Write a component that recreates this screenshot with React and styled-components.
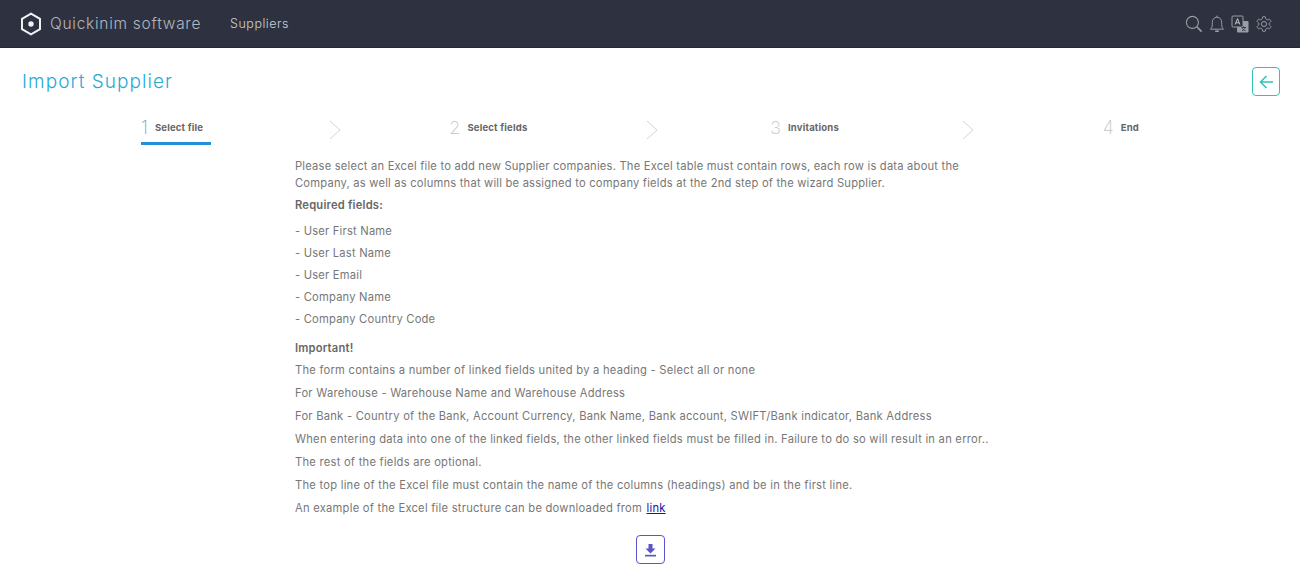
import React from "react";
import styled, { createGlobalStyle } from "styled-components";

const Global = createGlobalStyle`
  html, body { margin: 0; padding: 0; background: #fff; overflow: hidden; }
  body { font-family: Inter, "Noto Sans", sans-serif; color: #6b6b6b; }
`;
const Page = styled.div`height: 572px; overflow: hidden; display: flex; flex-direction: column;`;
const TopBar = styled.header`
  height: 47px; background: #2e3240; border-bottom: 1px solid #262a36; display: flex; align-items: center;
  padding: 0 27px 0 20px; flex: none;
`;
const Brand = styled.div`
  display: flex; align-items: center; gap: 8px; color: #b4b6bc; font-size: 15.5px; font-weight: 300; letter-spacing: 0.72px;
`;
const NavLink = styled.a`
  margin-left: 29px; color: #cfd0d4; font-size: 12.5px; font-weight: 300; letter-spacing: 0.5px;
`;
const Tools = styled.div`margin-left: auto; display: flex; align-items: center; gap: 6px; color: #9a9da5;`;
const TitleRow = styled.div`
  display: flex; justify-content: space-between; align-items: flex-start; padding: 19px 20px 0 22px;
`;
const Title = styled.h1`
  margin: 3px 0 0; font-size: 19px; font-weight: 300; color: #27a9d6; letter-spacing: 1.05px; line-height: 24px;
`;
const BackButton = styled.button`
  width: 28px; height: 29px; padding: 0; border: 1px solid #2ec4b6; border-radius: 4px; background: #fff; color: #2ec4b6;
  display: flex; align-items: center; justify-content: center;
`;
const Steps = styled.nav`
  display: grid; grid-template-columns: 1fr 12px 1fr 12px 1fr 12px 1fr; align-items: center;
  margin-top: 18px; height: 31px; padding: 0 22px 0 25px;
`;
const Step = styled.div`display: flex; justify-content: center; padding-right: 2px;`;
const StepInner = styled.div`
  display: flex; align-items: center; gap: 7px; height: 31px; box-sizing: border-box;
  padding: 0 8px 1px 0;
  border-bottom: 3px solid ${p => (p.$active ? "#2390d8" : "transparent")};
`;
const StepNumber = styled.span`
  font-size: 18px; font-weight: 200; color: ${p => (p.$active ? "#5aa9e0" : "#c4c4c4")}; line-height: 20px;
`;
const StepLabel = styled.span`font-size: 9.5px; font-weight: 700; color: #666; letter-spacing: 0.2px;`;
const Content = styled.main`
  margin-left: 295px; width: 711px; font-size: 11.2px; font-weight: 400; color: #777; letter-spacing: 0.2px;
`;
const Intro = styled.p`margin: 13px 0 0; line-height: 17px;`;
const Heading = styled.p`margin: ${p => p.$mt}px 0 0; font-weight: 600; line-height: 17px; color: #666;`;
const FieldList = styled.div`margin-top: 6px;`;
const Field = styled.div`line-height: 22px;`;
const NoteList = styled.div`margin-top: 2px; letter-spacing: 0.24px;`;
const Note = styled.div`line-height: 23px;`;
const DocLink = styled.a`color: #1a0dab; text-decoration: underline; margin-left: 1px;`;
const DownloadWrap = styled.div`display: flex; justify-content: center; margin-top: 15px;`;
const DownloadButton = styled.button`
  width: 29px; height: 29px; padding: 0; border: 1px solid #5a55c8; border-radius: 4px; background: #fff; color: #5a55c8;
  display: flex; align-items: center; justify-content: center;
`;

const Logo = () => (
  <svg width="22" height="24" viewBox="0 0 22 24" fill="none">
    <path d="M11 1.6 20 6.8V17.2L11 22.4 2 17.2V6.8Z" stroke="#eef0f2" strokeWidth="2" />
    <circle cx="11" cy="12" r="2.7" fill="#eef0f2" />
  </svg>
);
const Search = () => (
  <svg width="18" height="18" viewBox="0 0 18 18" fill="none" stroke="currentColor" strokeWidth="1.1">
    <circle cx="7.4" cy="7.4" r="6" />
    <path d="M11.8 11.8 16.6 16.6" strokeWidth="1.6" />
  </svg>
);
const Bell = () => (
  <svg width="16" height="18" viewBox="0 0 16 18" fill="none" stroke="currentColor" strokeWidth="1">
    <path d="M1.5 14.2c1.2-1.3 1.8-2.4 1.8-4.6V7.4C3.3 4.5 5.2 2.2 8 2.2s4.700 2.300 4.700 5.200v2.200c0 2.200.6 3.300 1.800 4.600Z" />
    <path d="M8 .6v1.600" />
    <path d="M6.200 16.200h3.600" strokeWidth="1.600" />
  </svg>
);
const Translate = () => (
  <svg width="18" height="18" viewBox="0 0 18 18">
    <rect x="6" y="6" width="11.500" height="11.500" rx="1" fill="#9a9da5" />
    <rect x="1" y="1" width="11" height="11" rx="1" fill="#2e3240" stroke="#9a9da5" strokeWidth="1" />
    <path d="M4.200 9.500 6.500 3.600 8.800 9.500M5 7.800h3" fill="none" stroke="#c4c6cc" strokeWidth="1" />
    <path d="M10.500 12.500h4.500M12.700 11.500v1M14 12.500c-.5 1.500-1.500 2.500-3 3.200M11.500 13.500c.6 1 1.500 1.700 3 2.200" fill="none" stroke="#2e3240" strokeWidth=".9" />
  </svg>
);
const Gear = () => (
  <svg width="18" height="18" viewBox="0 0 24 24" fill="none" stroke="currentColor" strokeWidth="1.300" strokeLinejoin="round">
    <path d="M12.220 2h-.44a2 2 0 0 0-2 2v.18a2 2 0 0 1-1 1.730l-.43.250a2 2 0 0 1-2 0l-.15-.080a2 2 0 0 0-2.730.730l-.220.380a2 2 0 0 0 .730 2.730l.150.100a2 2 0 0 1 1 1.720v.510a2 2 0 0 1-1 1.740l-.150.090a2 2 0 0 0-.730 2.730l.220.380a2 2 0 0 0 2.730.730l.150-.080a2 2 0 0 1 2 0l.430.250a2 2 0 0 1 1 1.730V20a2 2 0 0 0 2 2h.440a2 2 0 0 0 2-2v-.180a2 2 0 0 1 1-1.730l.430-.250a2 2 0 0 1 2 0l.150.080a2 2 0 0 0 2.730-.730l.220-.390a2 2 0 0 0-.730-2.730l-.150-.080a2 2 0 0 1-1-1.740v-.500a2 2 0 0 1 1-1.740l.150-.090a2 2 0 0 0 .730-2.730l-.220-.380a2 2 0 0 0-2.730-.730l-.150.080a2 2 0 0 1-2 0l-.430-.250a2 2 0 0 1-1-1.730V4a2 2 0 0 0-2-2z" />
    <circle cx="12" cy="12" r="3.400" />
  </svg>
);
const ArrowLeft = () => (
  <svg width="15" height="14" viewBox="0 0 15 14" fill="none" stroke="currentColor" strokeWidth="1.500">
    <path d="M14 7H1.500M7.500 1 1.500 7l6 6" />
  </svg>
);
const Chevron = () => (
  <svg width="12" height="20" viewBox="0 0 12 20" fill="none" stroke="#cfcfcf" strokeWidth="0.900">
    <path d="M1 1 11 10 1 19" />
  </svg>
);
const DownloadIcon = () => (
  <svg width="13" height="14" viewBox="0 0 13 14" fill="currentColor">
    <path d="M4.500 1h4v4.500h3L6.500 10.500 1.500 5.500h3Z" />
    <rect x="1" y="11.800" width="11" height="1.700" />
  </svg>
);

const steps = [["1", "Select file", true], ["2", "Select fields"], ["3", "Invitations"], ["4", "End"]];
const fields = ["User First Name", "User Last Name", "User Email", "Company Name", "Company Country Code"];
const notes = [
  "The form contains a number of linked fields united by a heading - Select all or none",
  "For Warehouse - Warehouse Name and Warehouse Address",
  "For Bank - Country of the Bank, Account Currency, Bank Name, Bank account, SWIFT/Bank indicator, Bank Address",
  "When entering data into one of the linked fields, the other linked fields must be filled in. Failure to do so will result in an error..",
  "The rest of the fields are optional.",
  "The top line of the Excel file must contain the name of the columns (headings) and be in the first line.",
];

export default function App() {
  return (
    <Page>
      <Global />
      <TopBar>
        <Brand><Logo />Quickinim software</Brand>
        <NavLink>Suppliers</NavLink>
        <Tools><Search /><Bell /><Translate /><Gear /></Tools>
      </TopBar>
      <TitleRow>
        <Title>Import Supplier</Title>
        <BackButton aria-label="Back"><ArrowLeft /></BackButton>
      </TitleRow>
      <Steps>
        {steps.map(([n, label, active], i) => (
          <React.Fragment key={n}>
            <Step>
              <StepInner $active={active}>
                <StepNumber $active={active}>{n}</StepNumber>
                <StepLabel>{label}</StepLabel>
              </StepInner>
            </Step>
            {i < 3 && <Chevron />}
          </React.Fragment>
        ))}
      </Steps>
      <Content>
        <Intro>
          Please select an Excel file to add new Supplier companies. The Excel table must contain rows, each row is data about the<br />
          Company, as well as columns that will be assigned to company fields at the 2nd step of the wizard Supplier.
        </Intro>
        <Heading $mt={5}>Required fields:</Heading>
        <FieldList>
          {fields.map(f => <Field key={f}>- {f}</Field>)}
        </FieldList>
        <Heading $mt={10}>Important!</Heading>
        <NoteList>
          {notes.map(n => <Note key={n}>{n}</Note>)}
          <Note>An example of the Excel file structure can be downloaded from <DocLink>link</DocLink></Note>
        </NoteList>
        <DownloadWrap>
          <DownloadButton aria-label="Download"><DownloadIcon /></DownloadButton>
        </DownloadWrap>
      </Content>
    </Page>
  );
}
